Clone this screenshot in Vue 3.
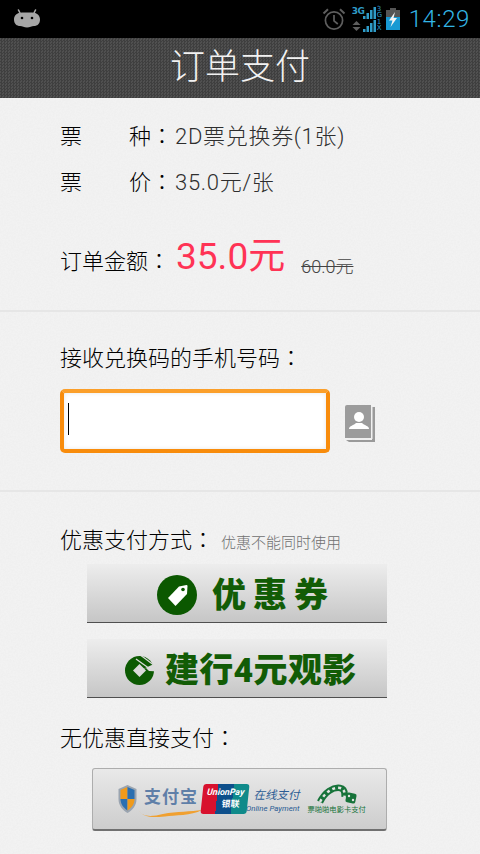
<template>
  <div class="page">
    <div class="status-bar">
      <svg class="android" width="26" height="20" viewBox="0 0 26 20">
        <path d="M6 4 4.500 1M20 4l1.500-3" stroke="#a6a6a6" stroke-width="1.600" stroke-linecap="round" />
        <path d="M8 3.500h10C23 3.500 26 6.500 26 10.500 26 15 23 17 20 17 17.500 17 16 18.500 13 18.500 10 18.500 8.500 17 6 17 3 17 0 15 0 10.500 0 6.500 3 3.500 8 3.500Z" fill="#a6a6a6" />
        <circle cx="8" cy="9" r="1.300" fill="#000" />
        <circle cx="18" cy="9" r="1.300" fill="#000" />
      </svg>
      <div class="status-right">
        <svg class="alarm" width="24" height="24" viewBox="0 0 24 24" fill="none" stroke="#5e5e5e" stroke-width="1.700">
          <circle cx="12" cy="13.500" r="8.600" />
          <path d="M12 8v5.800l3.800 3.200" />
          <path d="M1.500 6.500 6 2.200M22.500 6.500 18 2.200" stroke-width="2" />
        </svg>
        <div class="signal">
          <div class="signal-row">
            <span class="net">3G</span>
            <svg width="15" height="12" viewBox="0 0 15 12" fill="#2f9cc8">
              <rect x="2" y="9" width="2.500" height="3" />
              <rect x="5.500" y="6" width="2.500" height="6" />
              <rect x="9" y="3" width="2.500" height="9" />
              <rect x="12.500" y="0" width="2.500" height="12" />
            </svg>
            <span class="net-side">3<br />G</span>
          </div>
          <div class="signal-row">
            <svg class="updown" width="9" height="12" viewBox="0 0 9 12" fill="#5e5e5e">
              <path d="M4.500 1l4 4H.5ZM.5 7h8l-4 4Z" />
            </svg>
            <svg width="15" height="12" viewBox="0 0 15 12" fill="#2f9cc8">
              <rect x="2" y="9" width="2.500" height="3" />
              <rect x="5.500" y="6" width="2.500" height="6" />
              <rect x="9" y="3" width="2.500" height="9" />
              <rect x="12.500" y="0" width="2.500" height="12" />
            </svg>
            <span class="net-side">1<br />X</span>
          </div>
        </div>
        <svg width="14" height="22" viewBox="0 0 14 22">
          <rect x="4" y="0" width="6" height="2" fill="#555" />
          <rect x="0" y="2" width="14" height="20" fill="#555" />
          <rect x="0" y="9" width="14" height="13" fill="#189ad3" />
          <path d="M9 4 3 12.500h3.500L4.500 19 11 10H7.500Z" fill="#f4f4f4" />
        </svg>
        <span class="clock">14:29</span>
      </div>
    </div>

    <div class="title-bar">订单支付</div>

    <section class="block order">
      <div v-for="row in infoRows" :key="row.label[1]" class="info-row">
        <span class="info-label"><span>{{ row.label[0] }}</span><span>{{ row.label[1] }}</span></span>
        <span class="colon">：</span>
        <span class="info-value">{{ row.value }}</span>
      </div>
      <div class="amount-row">
        <span class="label">订单金额<span class="colon">：</span></span>
        <span class="amount">35.0元</span>
        <span class="old-price">60.0元</span>
      </div>
    </section>

    <section class="block phone">
      <div class="label">接收兑换码的手机号码<span class="colon">：</span></div>
      <div class="phone-row">
        <div class="phone-input"><i class="caret"></i></div>
        <svg class="contact" width="30" height="37" viewBox="0 0 30 37">
          <path d="M27 2h3v35H4l-3-2h26Z" fill="#9a9a9a" />
          <path d="M27 1v33H3" fill="none" stroke="#efefef" stroke-width="1" />
          <path d="M2 0h24v33H0V2Q0 0 2 0Z" fill="#9c9c9c" />
          <circle cx="14" cy="12" r="5" fill="#fff" />
          <path d="M4 24c0-3.500 5-3.500 7-6h6c2 2.500 7 2.500 7 6Z" fill="#fff" />
        </svg>
      </div>
    </section>

    <section class="pay">
      <div class="discount-title">
        <span class="label">优惠支付方式<span class="colon">：</span></span>
        <span class="hint">优惠不能同时使用</span>
      </div>
      <div class="green-btn coupon">
        <svg width="40" height="40" viewBox="0 0 40 40">
          <circle cx="20" cy="20" r="20" fill="#0b5800" />
          <path d="M11 23 22 11.500l7.500-1.500q1 0 1 1l-.5 8L18.500 31Z" fill="#fff" />
          <circle cx="26" cy="14.500" r="1.800" fill="#0b5800" />
        </svg>
        <span class="btn-text">优惠券</span>
      </div>
      <div class="green-btn ccb">
        <svg width="29" height="29" viewBox="0 0 29 29">
          <circle cx="14.500" cy="14.500" r="14.500" fill="#0c5a02" />
          <path d="M14.500 14.500 31 7V15.500L24 15 21 12Z" fill="#dadada" />
          <path d="M14.500 8 21 14.500 14.500 21 8 14.500Z" fill="#dadada" />
          <path d="M11 3 25 13M16 -.5 30 10" stroke="#dadada" stroke-width="1.300" fill="none" />
        </svg>
        <span class="btn-text tight">建行4元观影</span>
      </div>
      <div class="label direct">无优惠直接支付<span class="colon">：</span></div>
      <div class="pay-btn">
        <svg width="19" height="28" viewBox="0 0 19 28">
          <path d="M9.500 0 18.500 4V14C18.500 21 14 25.500 9.500 28 5 25.500 .5 21 .5 14V4Z" fill="#9aa4b0" />
          <path d="M9.500 2 2.500 5V14H9.500Z" fill="#f09a1a" />
          <path d="M9.500 2 16.500 5V14H9.500Z" fill="#2b6fb0" />
          <path d="M2.500 14H9.500V25.500C5.500 23 2.500 19 2.500 14Z" fill="#2b6fb0" />
          <path d="M16.500 14H9.500V25.500C13.500 23 16.500 19 16.500 14Z" fill="#f09a1a" />
        </svg>
        <div class="alipay">
          <span class="alipay-text">支付宝</span>
          <svg class="swoosh" width="63" height="9" viewBox="0 0 63 9">
            <path d="M0 2C3 9 12 9 24 6 38 3 52 4 63 2 52 8 36 7 26 8.500 12 10 3 9 0 2Z" fill="#f0a030" />
          </svg>
        </div>
        <div class="unionpay">
          <span class="up-en">UnionPay</span>
          <span class="up-cn">银联</span>
        </div>
        <div class="online">
          <span class="online-cn">在线支付</span>
          <span class="online-en">Online Payment</span>
        </div>
        <div class="film">
          <svg width="40" height="20" viewBox="0 0 40 20">
            <path d="M3 18C8 8 16 3 23 4 27 4.500 28 8 27.500 13" fill="none" stroke="#17733a" stroke-width="6.500" />
            <path d="M3 18C8 8 16 3 23 4 27 4.500 28 8 27.500 13" fill="none" stroke="#e4e4e4" stroke-width="2.500" stroke-dasharray="3 3" />
            <rect x="29" y="9" width="10" height="10" rx="2" fill="#17733a" transform="rotate(12 34 14)" />
            <circle cx="32" cy="12" r="1.200" fill="#e4e4e4" />
            <circle cx="36" cy="16" r="1.200" fill="#e4e4e4" />
          </svg>
          <span class="film-text">票啪啪电影卡支付</span>
        </div>
      </div>
    </section>
  </div>
</template>

<script setup>
const infoRows = [
  { label: ['票', '种'], value: '2D票兑换券(1张)' },
  { label: ['票', '价'], value: '35.0元/张' },
]
</script>

<style>
html, body { margin: 0; background: #f1f1f1; }
</style>

<style scoped>
.page {
  width: 480px;
  height: 854px;
  overflow: hidden;
  font-family: Roboto, "Noto Sans CJK SC", sans-serif;
  font-size: 22px;
  font-weight: 300;
  color: #000;
  background-color: #f2f2f2;
  background-image: url("data:image/svg+xml,%3Csvg xmlns='http://www.w3.org/2000/svg' width='240' height='240'%3E%3Cfilter id='n'%3E%3CfeTurbulence type='fractalNoise' baseFrequency='.6' numOctaves='2' stitchTiles='stitch'/%3E%3CfeColorMatrix values='0 0 0 0 .5 0 0 0 0 .5 0 0 0 0 .5 .7 0 0 0 -.25'/%3E%3C/filter%3E%3Crect width='240' height='240' filter='url(%23n)' opacity='.2'/%3E%3C/svg%3E");
}

.status-bar {
  height: 38px;
  background: #000;
  display: flex;
  align-items: center;
  justify-content: space-between;
  padding: 0 10px 0 14px;
}
.status-right { display: flex; align-items: center; }
.alarm { margin-right: 6px; }
.signal { display: flex; flex-direction: column; gap: 1px; margin-right: 4px; }
.signal-row { display: flex; align-items: flex-end; height: 12px; }
.net {
  width: 9px;
  font: bold 9px/9px "DejaVu Sans", sans-serif;
  color: #2f9cc8;
  letter-spacing: -.5px;
  white-space: nowrap;
  align-self: flex-start;
}
.net-side {
  width: 5px;
  margin-left: 1px;
  font: 7px/6.500px "DejaVu Sans", sans-serif;
  color: #2f9cc8;
}
.clock {
  margin-left: 9px;
  font: 300 24px Roboto, sans-serif;
  letter-spacing: .6px;
  color: #33b5e5;
}

.title-bar {
  height: 60px;
  line-height: 60px;
  text-align: center;
  font-size: 35px;
  color: #f2f2f2;
  background: repeating-conic-gradient(#3f3f3f 0 25%, #505050 0 50%) 0 0 / 3px 3px;
}

.block { border-bottom: 2px solid #e6e6e6; padding-left: 60px; }

.order { box-sizing: border-box; height: 214px; padding-top: 13px; }
.info-row { display: flex; align-items: center; height: 46px; }
.info-label { display: flex; justify-content: space-between; width: 91px; }
.info-value { color: #2e2e2e; margin-left: 2px; letter-spacing: .7px; }
.colon { font-family: "Noto Sans CJK JP", sans-serif; }

.amount-row { display: flex; align-items: baseline; margin-top: 23px; }
.amount { font-size: 37px; font-weight: 400; color: #ff3355; margin-left: 6px; }
.old-price {
  margin-left: 16px;
  font-size: 18px;
  color: #444;
  text-decoration: line-through;
  transform: translateY(4px);
}

.phone { height: 180px; box-sizing: border-box; padding-top: 28px; }
.phone .label { line-height: 32px; }
.phone-row { display: flex; align-items: flex-start; margin-top: 14px; }
.phone-input {
  width: 270px;
  height: 64px;
  box-sizing: border-box;
  border: 4px solid #f88c0c;
  border-top-color: #fb9f2a;
  border-radius: 5px;
  background: #fff;
  box-shadow: inset 0 0 5px #e8e8e8;
  padding: 10px 0 0 4px;
}
.caret { display: block; width: 1px; height: 32px; background: #000; }
.contact { margin: 16px 0 0 15px; }

.pay { padding-top: 30px; }
.discount-title { display: flex; align-items: baseline; padding-left: 60px; height: 32px; }
.hint { font-size: 15px; color: #6f6f6f; margin-left: 7px; }

.green-btn {
  width: 300px;
  height: 54px;
  padding-top: 4px;
  margin: 10px 0 0 87px;
  display: flex;
  align-items: center;
  background: linear-gradient(#ededed, #c6c6c6);
  border-bottom: 1px solid #4f4f4f;
}
.green-btn + .green-btn { margin-top: 16px; }
.coupon { padding-left: 70px; width: 230px; }
.ccb { padding-left: 38px; width: 262px; }
.btn-text {
  font-size: 34px;
  font-weight: 900;
  letter-spacing: 7px;
  margin-left: 15px;
  color: #125c06;
  line-height: 1;
}
.btn-text.tight { letter-spacing: .3px; margin-left: 11px; }

.direct { padding-left: 60px; margin-top: 22px; line-height: 32px; }

.pay-btn {
  width: 295px;
  height: 63px;
  box-sizing: border-box;
  margin: 13px 0 0 92px;
  padding-left: 25px;
  display: flex;
  align-items: center;
  border: 1px solid #adadad;
  border-bottom: 2px solid #707070;
  border-radius: 3px;
  background: linear-gradient(#e9e9e9, #cdcdcd);
}
.alipay { position: relative; margin-left: 5px; width: 57px; }
.alipay-text {
  display: block;
  font-size: 17px;
  font-weight: 700;
  color: #5f7fa8;
  letter-spacing: 1px;
  line-height: 26px;
  margin: -4px 0 0 2px;
}
.swoosh { position: absolute; left: -3px; bottom: -7px; }
.unionpay {
  width: 46px;
  height: 30px;
  margin-left: 3px;
  transform: skewX(-6deg);
  border-radius: 3px;
  background: linear-gradient(90deg, #d8112e 0 32%, #0d4f8b 32% 66%, #0f8a8a 66%);
  color: #fff;
  display: flex;
  flex-direction: column;
  align-items: center;
  font-weight: 700;
}
.up-en { font-size: 9px; line-height: 13px; font-style: italic; margin-top: 2px; white-space: nowrap; }
.up-cn { font-size: 9px; line-height: 11px; margin-left: 12px; }
.online {
  margin-left: -2px;
  display: flex;
  flex-direction: column;
  align-items: flex-end;
  color: #2a5c94;
  font-weight: 400;
  padding-top: 3px;
}
.online-cn { font-size: 11.500px; line-height: 17px; font-style: italic; }
.online-en { font-size: 7.900px; line-height: 10px; font-style: italic; white-space: nowrap; }
.film { margin-left: 8px; display: flex; flex-direction: column; align-items: center; font-weight: 400; }
.film-text { font-size: 7.300px; line-height: 11px; color: #17733a; white-space: nowrap; }
</style>
